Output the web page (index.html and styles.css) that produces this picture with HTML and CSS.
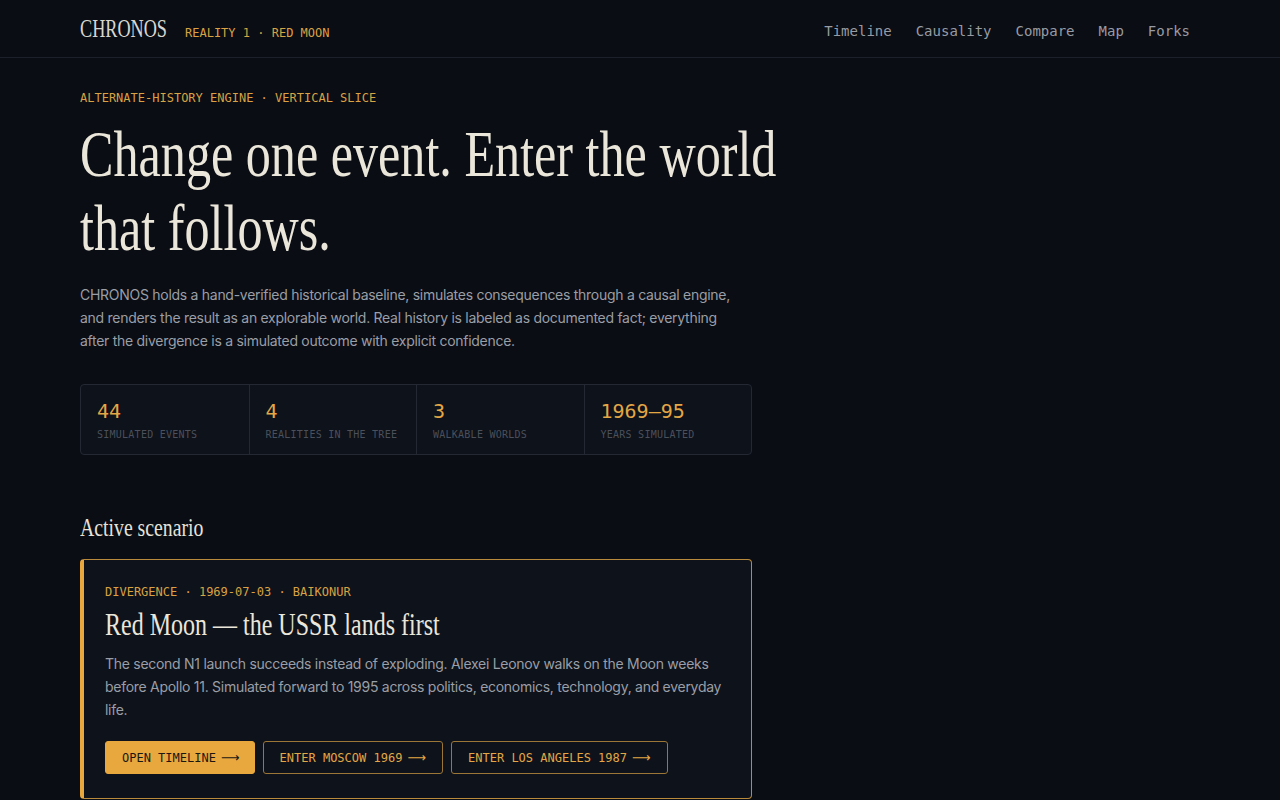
FILE: index.html
```html
<!DOCTYPE html>
<html lang="en">
<head>
<meta charset="utf-8">
<title>CHRONOS</title>
<link rel="stylesheet" href="styles.css">
</head>
<body>
<header class="topbar">
  <div class="topbar-inner">
    <div class="brand">
      <div class="logo"><span class="squeeze logo-text">CHRONOS</span></div>
      <span class="reality">REALITY 1 · RED MOON</span>
    </div>
    <nav class="nav">
      <a href="#">Timeline</a>
      <a href="#">Causality</a>
      <a href="#">Compare</a>
      <a href="#">Map</a>
      <a href="#">Forks</a>
    </nav>
  </div>
</header>

<main class="page">
  <section class="hero">
    <p class="eyebrow">ALTERNATE-HISTORY ENGINE · VERTICAL SLICE</p>
    <h1 class="headline">
      <span class="squeeze hl-line">Change one event. Enter the world</span>
      <span class="squeeze hl-line">that follows.</span>
    </h1>
    <p class="lede">CHRONOS holds a hand-verified historical baseline, simulates consequences through a causal engine, and renders the result as an explorable world. Real history is labeled as documented fact; everything after the divergence is a simulated outcome with explicit confidence.</p>

    <div class="stats">
      <div class="stat">
        <div class="stat-num">44</div>
        <div class="stat-label">SIMULATED EVENTS</div>
      </div>
      <div class="stat">
        <div class="stat-num">4</div>
        <div class="stat-label">REALITIES IN THE TREE</div>
      </div>
      <div class="stat">
        <div class="stat-num">3</div>
        <div class="stat-label">WALKABLE WORLDS</div>
      </div>
      <div class="stat">
        <div class="stat-num">1969–95</div>
        <div class="stat-label">YEARS SIMULATED</div>
      </div>
    </div>
  </section>

  <section class="scenario">
    <h2 class="section-title"><span class="squeeze">Active scenario</span></h2>
    <article class="card">
      <p class="card-meta">DIVERGENCE · 1969-07-03 · BAIKONUR</p>
      <h3 class="card-title"><span class="squeeze card-title-text">Red Moon — the USSR lands first</span></h3>
      <p class="card-text">The second N1 launch succeeds instead of exploding. Alexei Leonov walks on the Moon weeks before Apollo 11. Simulated forward to 1995 across politics, economics, technology, and everyday life.</p>
      <div class="actions">
        <a href="#" class="btn btn-primary">OPEN TIMELINE <span class="arrow">⟶</span></a>
        <a href="#" class="btn btn-outline">ENTER MOSCOW 1969 <span class="arrow">⟶</span></a>
        <a href="#" class="btn btn-outline">ENTER LOS ANGELES 1987 <span class="arrow">⟶</span></a>
      </div>
    </article>
  </section>
</main>
</body>
</html>
```

FILE: styles.css
```css
* { box-sizing: border-box; }

html, body {
  margin: 0;
  padding: 0;
}

body {
  background: #0a0d14;
  color: #e9e5da;
  font-family: "Inter", "Liberation Sans", sans-serif;
  min-height: 800px;
}

a { text-decoration: none; color: inherit; }

p, h1, h2, h3 { margin: 0; font-weight: 400; }

.squeeze {
  display: inline-block;
  white-space: nowrap;
  transform-origin: left center;
  font-family: "Liberation Serif", "Times New Roman", serif;
}

/* Header */
.topbar {
  border-bottom: 1px solid #1b202a;
  height: 58px;
}

.topbar-inner {
  max-width: 1120px;
  margin: 0 auto;
  height: 57px;
  display: flex;
  align-items: center;
  justify-content: space-between;
}

.brand {
  display: flex;
  align-items: baseline;
  gap: 17px;
}

.logo {
  width: 88px;
  white-space: nowrap;
}

.logo-text {
  font-size: 26px;
  line-height: 30px;
  color: #d9d6cf;
  transform: scaleX(0.7);
}

.reality {
  font-family: "DejaVu Sans Mono", "Liberation Mono", monospace;
  font-size: 12px;
  color: #d9a243;
}

.nav {
  display: flex;
  gap: 24px;
  padding-right: 10px;
  padding-top: 4px;
}

.nav a {
  font-family: "DejaVu Sans Mono", "Liberation Mono", monospace;
  font-size: 14px;
  color: #979ba3;
}

/* Main */
.page {
  max-width: 1120px;
  margin: 0 auto;
}

.hero {
  padding-top: 32px;
  max-width: 672px;
}

.eyebrow {
  font-family: "DejaVu Sans Mono", "Liberation Mono", monospace;
  font-size: 12px;
  line-height: 16px;
  color: #d9a243;
}

.headline {
  margin-top: 11px;
  font-size: 66px;
  line-height: 74px;
  color: #ebe6da;
}

.hl-line {
  display: block;
  transform: scaleX(0.76);
}

.lede {
  margin-top: 18px;
  max-width: 660px;
  font-size: 14px;
  line-height: 23px;
  color: #9a9ea6;
  letter-spacing: -0.28px;
}

.stats {
  margin-top: 32px;
  display: grid;
  grid-template-columns: repeat(4, 1fr);
  border: 1px solid #232833;
  border-radius: 4px;
  background: #0e121a;
  height: 71px;
}

.stat {
  padding: 14px 16px 0;
  border-left: 1px solid #232833;
}

.stat:first-child { border-left: none; }

.stat-num {
  font-family: "DejaVu Sans Mono", "Liberation Mono", monospace;
  font-size: 20px;
  line-height: 24px;
  color: #e3a745;
}

.stat-label {
  margin-top: 6px;
  font-family: "DejaVu Sans Mono", "Liberation Mono", monospace;
  font-size: 10px;
  line-height: 12px;
  letter-spacing: 0.25px;
  color: #4b505a;
}

/* Scenario */
.scenario {
  max-width: 672px;
  margin-top: 56px;
}

.section-title {
  font-size: 26px;
  line-height: 32px;
  color: #e6e2d8;
}

.section-title .squeeze {
  transform: scaleX(0.76);
}

.card {
  margin-top: 15px;
  background: #0e121a;
  border: 1px solid #b98a3c;
  border-left: 4px solid #e8a83e;
  border-radius: 4px;
  padding: 24px 24px 24px 21px;
}

.card-meta {
  font-family: "DejaVu Sans Mono", "Liberation Mono", monospace;
  font-size: 12px;
  line-height: 16px;
  color: #d9a243;
}

.card-title {
  margin-top: 4px;
  font-size: 32px;
  line-height: 40px;
  color: #ebe6da;
}

.card-title-text {
  transform: scaleX(0.75);
}

.card-text {
  margin-top: 8px;
  font-size: 14px;
  line-height: 23px;
  color: #9a9ea6;
  letter-spacing: -0.28px;
}

.actions {
  margin-top: 20px;
  display: flex;
  gap: 8px;
}

.btn {
  display: inline-flex;
  align-items: center;
  gap: 5px;
  height: 33px;
  padding: 0 16px;
  border-radius: 3px;
  font-family: "DejaVu Sans Mono", "Liberation Mono", monospace;
  font-size: 12px;
}

.btn-primary {
  background: #e8a83e;
  color: #1a1712;
  border: 1px solid #e8a83e;
  padding: 0 14px 0 16px;
}

.btn-outline {
  border: 1px solid #9c7636;
  color: #e3a745;
}

.arrow {
  font-family: "DejaVu Sans", sans-serif;
  font-size: 13px;
}
```
